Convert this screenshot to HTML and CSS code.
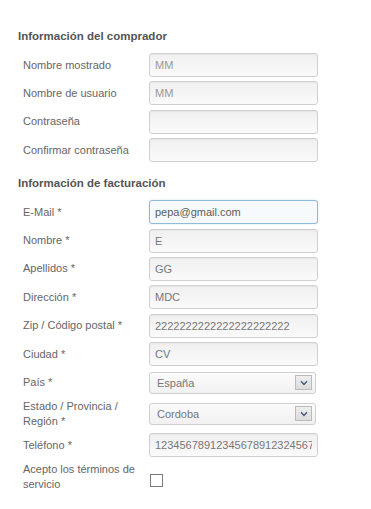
FILE: index.html
```html
<!DOCTYPE html>
<html lang="es">
<head>
    <meta charset="UTF-8">
    <meta name="viewport" content="width=device-width, initial-scale=1.0">
    <title>Información del comprador</title>
    <link rel="stylesheet" href="styles.css">
</head>
<body>
    <div class="checkout">
        <h3 class="section-title">Información del comprador</h3>
        <div class="form-rows">
            <div class="row">
                <label for="displayName">Nombre mostrado</label>
                <input type="text" id="displayName" class="field field-muted" value="MM" readonly>
            </div>
            <div class="row">
                <label for="userName">Nombre de usuario</label>
                <input type="text" id="userName" class="field field-muted" value="MM" readonly>
            </div>
            <div class="row">
                <label for="password">Contraseña</label>
                <input type="password" id="password" class="field">
            </div>
            <div class="row">
                <label for="password2">Confirmar contraseña</label>
                <input type="password" id="password2" class="field">
            </div>
        </div>

        <h3 class="section-title billing">Información de facturación</h3>
        <div class="form-rows">
            <div class="row">
                <label for="email">E-Mail *</label>
                <input type="text" id="email" class="field field-focus" value="pepa@gmail.com">
            </div>
            <div class="row">
                <label for="firstName">Nombre *</label>
                <input type="text" id="firstName" class="field" value="E">
            </div>
            <div class="row">
                <label for="lastName">Apellidos *</label>
                <input type="text" id="lastName" class="field" value="GG">
            </div>
            <div class="row">
                <label for="address">Dirección *</label>
                <input type="text" id="address" class="field" value="MDC">
            </div>
            <div class="row">
                <label for="zip">Zip / Código postal *</label>
                <input type="text" id="zip" class="field" value="2222222222222222222222">
            </div>
            <div class="row">
                <label for="city">Ciudad *</label>
                <input type="text" id="city" class="field" value="CV">
            </div>
            <div class="row">
                <label>País *</label>
                <div class="select">
                    <span>España</span>
                    <span class="select-arrow">
                        <svg width="8" height="6" viewBox="0 0 8 6"><path d="M1 1.2 L4 4.4 L7 1.2" fill="none" stroke="#4a5d80" stroke-width="1.5"/></svg>
                    </span>
                </div>
            </div>
            <div class="row">
                <label>Estado / Provincia / Región *</label>
                <div class="select">
                    <span>Cordoba</span>
                    <span class="select-arrow">
                        <svg width="8" height="6" viewBox="0 0 8 6"><path d="M1 1.2 L4 4.4 L7 1.2" fill="none" stroke="#4a5d80" stroke-width="1.5"/></svg>
                    </span>
                </div>
            </div>
            <div class="row">
                <label for="phone">Teléfono *</label>
                <input type="text" id="phone" class="field" value="123456789123456789123245678">
            </div>
            <div class="row">
                <label for="terms">Acepto los términos de servicio</label>
                <input type="checkbox" id="terms" class="check">
            </div>
        </div>
    </div>
</body>
</html>
```

FILE: styles.css
```css
body {
    margin: 0;
    background-color: #fff;
    font-family: 'Liberation Sans', Arial, sans-serif;
    color: #666;
}
.checkout {
    padding: 28px 0 0 18px;
}
.section-title {
    margin: 0;
    font-size: 11.5px;
    line-height: 16px;
    font-weight: bold;
    color: #555;
}
.section-title.billing {
    margin-top: 13px;
}
.form-rows {
    display: flex;
    flex-direction: column;
    gap: 4.4px;
    margin-top: 9px;
    padding-left: 5px;
}
.row {
    display: grid;
    grid-template-columns: 126px 169px;
    align-items: center;
    min-height: 24px;
}
label {
    font-size: 11px;
    line-height: 15px;
    color: #666;
    padding-right: 14px;
}
.field {
    box-sizing: border-box;
    width: 169px;
    height: 24px;
    margin: 0;
    padding: 0 5px;
    border: 1px solid #d0d0d0;
    border-radius: 3px;
    background: linear-gradient(#f0f0f0, #fafafa);
    box-shadow: inset 0 1px 1px rgba(0, 0, 0, 0.04);
    font-family: 'Liberation Sans', Arial, sans-serif;
    font-size: 11px;
    color: #777;
    outline: none;
}
.field-muted {
    color: #999;
}
.field-focus {
    border-color: #8fbcd9;
    background: #f7fafc;
    color: #5c5c5c;
    box-shadow: 0 0 2px rgba(100, 160, 210, 0.35);
}
.select {
    box-sizing: border-box;
    width: 167px;
    height: 22px;
    display: flex;
    align-items: center;
    justify-content: space-between;
    padding: 0 3px 0 7px;
    border: 1px solid #d0d0d0;
    border-radius: 3px;
    background: linear-gradient(#fbfbfb, #f1f1f1);
    font-size: 11px;
    color: #777;
}
.select-arrow {
    box-sizing: border-box;
    width: 17px;
    height: 15px;
    display: flex;
    align-items: center;
    justify-content: center;
    border: 1px solid #bbb;
    background: linear-gradient(#eee, #dcdcdc);
}
.check {
    appearance: none;
    -webkit-appearance: none;
    box-sizing: border-box;
    width: 13px;
    height: 13px;
    margin: 12px 0 0 1px;
    align-self: start;
    border: 1px solid #7a7a7a;
    background: #fff;
}
```
